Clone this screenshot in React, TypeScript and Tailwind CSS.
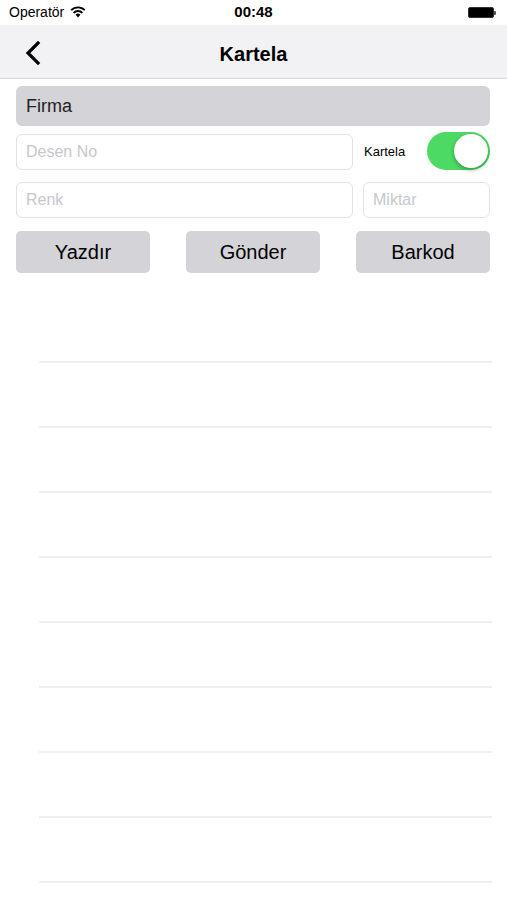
import React from 'react';

const font = { fontFamily: '"Liberation Sans", Arial, sans-serif' };

const StatusBar = () => (
  <div className="relative h-[25px] bg-white flex items-center px-[9px] text-[14px] text-black">
    <span>Operatör</span>
    <svg width="16" height="12" viewBox="0 0 16 12" className="ml-[6px] -mt-[2px]">
      <path d="M8 11.5 L5.6 8.8 A3.4 3.4 0 0 1 10.4 8.8 Z" fill="#000" />
      <path d="M3.6 6.8 A6.2 6.2 0 0 1 12.4 6.8" stroke="#000" strokeWidth="1.9" fill="none" />
      <path d="M1.2 4.2 A9.6 9.6 0 0 1 14.8 4.2" stroke="#000" strokeWidth="1.9" fill="none" />
    </svg>
    <span className="absolute left-0 right-0 text-center font-bold text-[15px] pointer-events-none">00:48</span>
    <div className="ml-auto flex items-center mr-[2px]">
      <div className="w-[26px] h-[11px] rounded-[2px] bg-black border border-[#333]" />
      <div className="w-[2px] h-[4px] bg-[#555] rounded-r-[1px]" />
    </div>
  </div>
);

const NavBar = () => (
  <div className="relative h-[54px] bg-[#f2f2f4] border-b border-[#d6d6da] flex items-center">
    <svg width="18" height="24" viewBox="0 0 18 24" className="ml-[24px] mt-[2px]">
      <path d="M14 2 L4 12 L14 22" stroke="#000" strokeWidth="3.2" fill="none" strokeLinecap="square" />
    </svg>
    <span className="absolute left-0 right-0 top-[14px] text-center text-[20px] font-bold text-black pointer-events-none">
      Kartela
    </span>
  </div>
);

const Field = ({ placeholder, className }: { placeholder: string; className: string }) => (
  <div
    className={`h-[36px] rounded-[6px] border border-[#e2e2e4] bg-white flex items-center px-[9px] text-[16px] text-[#c7c7cd] ${className}`}
  >
    {placeholder}
  </div>
);

const Button = ({ label }: { label: string }) => (
  <div className="w-[134px] h-[42px] rounded-[5px] bg-[#d3d3d8] flex items-center justify-center text-[20px] text-black">
    {label}
  </div>
);

export default function App() {
  const rows = Array.from({ length: 9 });
  return (
    <div className="w-[507px] h-[900px] bg-white overflow-hidden" style={font}>
      <StatusBar />
      <NavBar />
      <div className="pl-[16px] pr-[17px] pt-[7px]">
        <div className="h-[40px] rounded-[6px] bg-[#d3d3d8] flex items-center px-[10px] text-[18px] text-[#222]">
          Firma
        </div>
        <div className="mt-[8px] flex items-center">
          <Field placeholder="Desen No" className="w-[337px]" />
          <span className="ml-[11px] text-[13px] text-black">Kartela</span>
          <div className="ml-auto -mt-[2px] w-[63px] h-[38px] rounded-full bg-[#4cd964] p-[2px] flex justify-end">
            <div className="w-[34px] h-[34px] rounded-full bg-white shadow-[0_2px_4px_rgba(0,0,0,0.3)]" />
          </div>
        </div>
        <div className="mt-[12px] flex">
          <Field placeholder="Renk" className="w-[337px]" />
          <Field placeholder="Miktar" className="ml-auto w-[127px]" />
        </div>
        <div className="mt-[13px] flex justify-between">
          <Button label="Yazdır" />
          <Button label="Gönder" />
          <Button label="Barkod" />
        </div>
      </div>
      <div className="mt-[25px]">
        {rows.map((_, i) => (
          <div key={i} className="h-[65px] ml-[39px] mr-[15px] border-b-2 border-[#efefef]" />
        ))}
      </div>
    </div>
  );
}
